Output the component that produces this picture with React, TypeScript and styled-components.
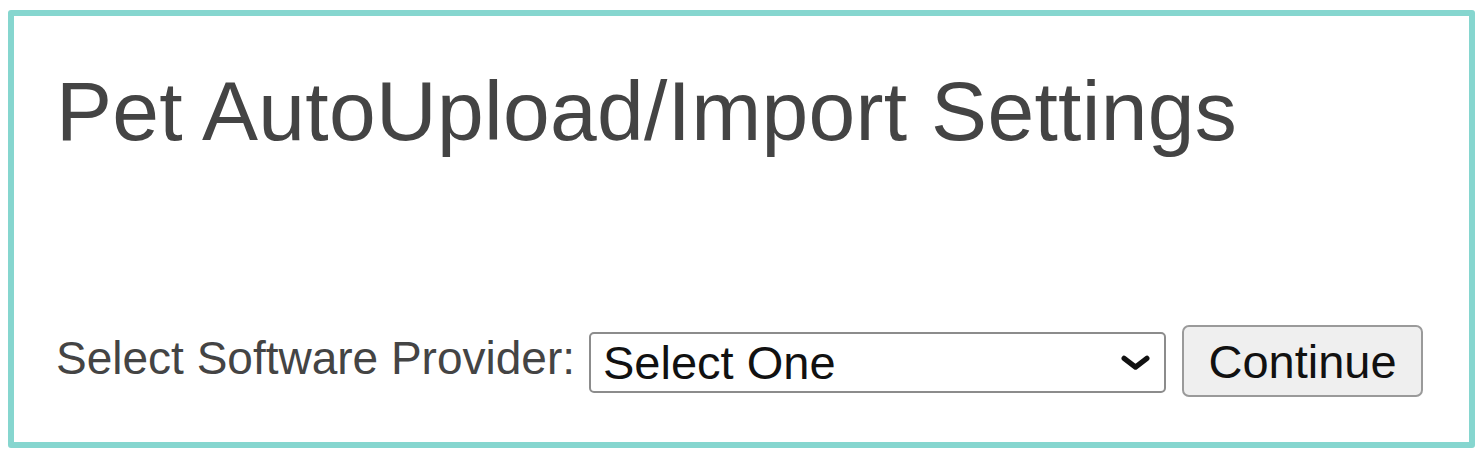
import React from 'react'
import styled, { createGlobalStyle } from 'styled-components'

const GlobalStyle = createGlobalStyle`
  html, body {
    margin: 0;
    padding: 0;
    background: #ffffff;
  }
  body {
    font-family: 'Liberation Sans', Arial, sans-serif;
  }
`

const App = () => {
  return (
    <>
      <GlobalStyle />
      <Frame>
        <Title>Pet AutoUpload/Import Settings</Title>
        <FormRow>
          <Label htmlFor="provider">Select Software Provider:</Label>
          <SelectWrap>
            <Select id="provider" defaultValue="">
              <option value="">Select One</option>
            </Select>
            <Chevron viewBox="0 0 28 14" aria-hidden="true">
              <polyline points="3,3 14,11.5 25,3" />
            </Chevron>
          </SelectWrap>
          <Button type="button">Continue</Button>
        </FormRow>
      </Frame>
    </>
  )
}

export default App

const Frame = styled.div`
  box-sizing: border-box;
  margin: 10px 0 0 8px;
  width: 1467px;
  height: 438px;
  border: 6px solid #86d6cf;
  border-radius: 3px;
  padding: 53px 0 0 42px;
  display: flex;
  flex-direction: column;
`

const Title = styled.h1`
  margin: 0;
  font-size: 84px;
  font-weight: 400;
  line-height: 1;
  color: #444444;
  letter-spacing: 0.3px;
`

const FormRow = styled.div`
  display: flex;
  flex-direction: row;
  align-items: flex-start;
  margin-top: 172px;
`

const Label = styled.label`
  margin-top: 10px;
  margin-right: 14px;
  font-size: 46px;
  line-height: 1;
  color: #444444;
`

const SelectWrap = styled.div`
  position: relative;
  margin-top: 7px;
  margin-right: 16px;
`

const Select = styled.select`
  appearance: none;
  -webkit-appearance: none;
  box-sizing: border-box;
  width: 577px;
  height: 61px;
  padding: 0 50px 0 12px;
  border: 2px solid #8c8c8c;
  border-radius: 5px;
  background: #ffffff;
  font-family: 'Liberation Sans', Arial, sans-serif;
  font-size: 47px;
  color: #111111;
  outline: none;
`

const Chevron = styled.svg`
  position: absolute;
  right: 16px;
  top: 23px;
  width: 29px;
  height: 15px;
  pointer-events: none;
  polyline {
    fill: none;
    stroke: #111111;
    stroke-width: 5;
    stroke-linecap: round;
    stroke-linejoin: round;
  }
`

const Button = styled.button`
  box-sizing: border-box;
  width: 241px;
  height: 72px;
  padding: 0;
  border: 2px solid #9a9a9a;
  border-radius: 7px;
  background: #efefef;
  font-family: 'Liberation Sans', Arial, sans-serif;
  font-size: 47px;
  color: #111111;
`
